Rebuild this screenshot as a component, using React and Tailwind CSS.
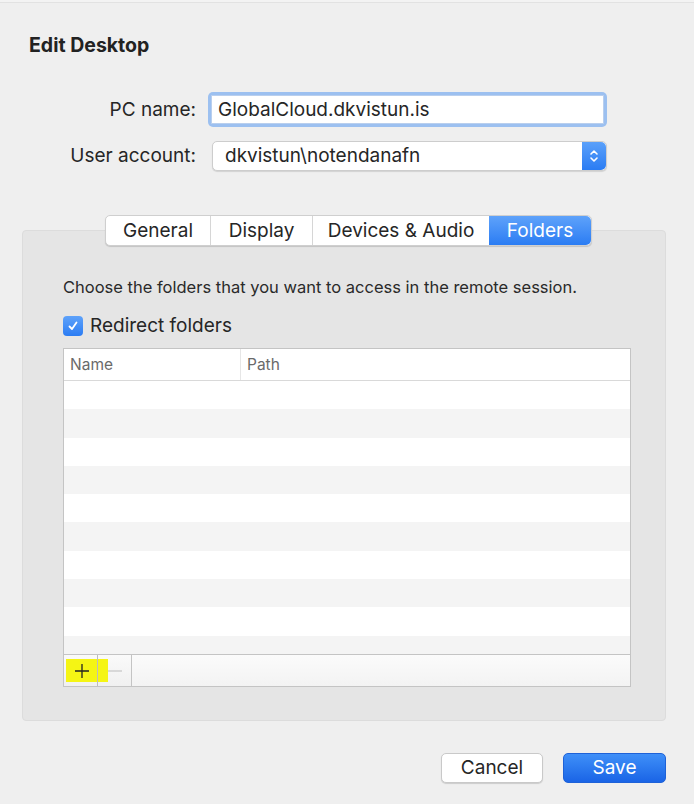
import React from "react";

const font = { fontFamily: "Inter, Roboto, 'Noto Sans', sans-serif" };

const Tab = ({ label, active, last }) => (
  <div
    className={`h-full flex items-center justify-center text-[19px] ${
      active
        ? "bg-gradient-to-b from-[#5ea2fa] to-[#2a7cf3] text-white rounded-r-[5px]"
        : "text-[#262626]"
    } ${!active && !last ? "border-r border-[#d6d6d6]" : ""}`}
  >
    {label}
  </div>
);

const Stepper = () => (
  <div className="w-[24px] h-full bg-gradient-to-b from-[#5aa0fa] to-[#2a7cf3] rounded-r-[5px] flex items-center justify-center">
    <svg width="10" height="16" viewBox="0 0 10 16" fill="none" stroke="white" strokeWidth="1.6" strokeLinecap="round" strokeLinejoin="round">
      <path d="M2 6 L5 3 L8 6" />
      <path d="M2 10 L5 13 L8 10" />
    </svg>
  </div>
);

export default function App() {
  const rows = Array.from({ length: 9 });
  return (
    <div className="w-[694px] h-[804px] bg-[#efefef] overflow-hidden text-[#262626]" style={font}>
      <div className="h-[3px] border-b border-[#e2e2e2] bg-[#f3f3f3]" />

      <div className="pl-[29px] pt-[32px] text-[19.5px] font-bold text-[#222] leading-[20px]">Edit Desktop</div>

      {/* form */}
      <div className="mt-[37px] flex flex-col gap-[14px]">
        <div className="flex items-center h-[35px]">
          <div className="w-[196px] text-right text-[19px] leading-[22px]">PC name:</div>
          <div className="ml-[12px] w-[399px] h-[35px] rounded-[5px] bg-[#9cc0f0] p-[3px]">
            <div className="h-full bg-white border border-[#b9cfee] flex items-center pl-[6px] text-[19px] leading-[22px]">
              GlobalCloud.dkvistun.is
            </div>
          </div>
        </div>
        <div className="flex items-center h-[30px]">
          <div className="w-[196px] text-right text-[19px] leading-[22px]">User account:</div>
          <div className="ml-[16px] w-[395px] h-[30px] rounded-[5px] bg-white border border-[#cdcdcd] shadow-[0_1px_1px_rgba(0,0,0,0.12)] flex">
            <div className="flex-1 flex items-center pl-[12px] text-[19px] leading-[22px]">dkvistun\notendanafn</div>
            <Stepper />
          </div>
        </div>
      </div>

      {/* tabs */}
      <div className="mt-[44px] relative z-10 ml-[105px] w-[487px] h-[31px] flex bg-white border border-[#cfcfcf] rounded-[5px] shadow-[0_1px_1px_rgba(0,0,0,0.15)] -mb-[16px] leading-[22px]">
        <div className="w-[105px]"><Tab label="General" /></div>
        <div className="w-[102px]"><Tab label="Display" /></div>
        <div className="w-[176px]"><Tab label="Devices & Audio" last /></div>
        <div className="flex-1"><Tab label="Folders" active /></div>
      </div>

      {/* panel */}
      <div className="mx-[22px] w-[644px] h-[491px] bg-[#e5e5e5] border border-[#dcdcdc] rounded-[4px] pt-[46px] px-[40px]">
        <div className="text-[16.5px] text-[#2a2a2a] leading-[20px] whitespace-nowrap">
          Choose the folders that you want to access in the remote session.
        </div>
        <div className="mt-[18px] h-[22px] flex items-center gap-[7px]">
          <div className="w-[20px] h-[20px] rounded-[4px] bg-gradient-to-b from-[#5ea2fa] to-[#2a7cf3] flex items-center justify-center">
            <svg width="12" height="12" viewBox="0 0 12 12" fill="none" stroke="white" strokeWidth="1.8" strokeLinecap="round" strokeLinejoin="round">
              <path d="M2.5 6.5 L5 9 L9.5 2.5" />
            </svg>
          </div>
          <div className="text-[19px] leading-[22px]">Redirect folders</div>
        </div>

        {/* table */}
        <div className="mt-[11px] w-[568px] h-[339px] border border-[#c4c4c4] bg-white flex flex-col">
          <div className="h-[32px] shrink-0 flex border-b border-[#d9d9d9] text-[15.5px] leading-[20px] text-[#6a6a6a]">
            <div className="w-[177px] border-r border-[#e6e6e6] flex items-center pl-[6px]">Name</div>
            <div className="flex-1 flex items-center pl-[6px]">Path</div>
          </div>
          <div className="flex-1 flex flex-col overflow-hidden bg-[#f4f4f4]">
            {rows.map((_, i) => (
              <div key={i} className={`h-[28.3px] shrink-0 ${i % 2 === 0 ? "bg-white" : "bg-[#f4f4f4]"}`} />
            ))}
          </div>
          <div className="h-[32px] shrink-0 flex border-t border-[#c4c4c4] bg-gradient-to-b from-[#fafafa] to-[#f0f0f0]">
            <div className="w-[34px] border-r border-[#bdbdbd] flex items-center justify-end">
              <div className="w-[31px] h-[23px] bg-[#f5f514] flex items-center justify-center">
                <svg width="18" height="18" viewBox="0 0 18 18" stroke="#222" strokeWidth="1.3">
                  <path d="M9 2 V16 M2 9 H16" />
                </svg>
              </div>
            </div>
            <div className="w-[34px] border-r border-[#c4c4c4] relative flex items-center justify-center">
              <div className="absolute left-0 top-[4px] h-[23px] w-[10px] bg-[#f5f514]" />
              <svg width="18" height="18" viewBox="0 0 18 18" stroke="#c8c8c8" strokeWidth="1.3" className="relative">
                <path d="M2 9 H16" />
              </svg>
            </div>
            <div className="flex-1 bg-gradient-to-b from-[#fbfbfb] to-[#f3f3f3]" />
          </div>
        </div>
      </div>

      {/* buttons */}
      <div className="mt-[32px] flex justify-end pr-[28px] gap-[20px]">
        <button className="w-[102px] h-[30px] bg-white border border-[#c9c9c9] rounded-[5px] shadow-[0_1px_1px_rgba(0,0,0,0.15)] text-[19px] leading-[22px] text-[#262626]">
          Cancel
        </button>
        <button className="w-[103px] h-[30px] rounded-[5px] bg-gradient-to-b from-[#3f8ff8] to-[#1a64e6] border border-[#1e62d8] text-[19px] leading-[22px] text-white">
          Save
        </button>
      </div>
    </div>
  );
}
